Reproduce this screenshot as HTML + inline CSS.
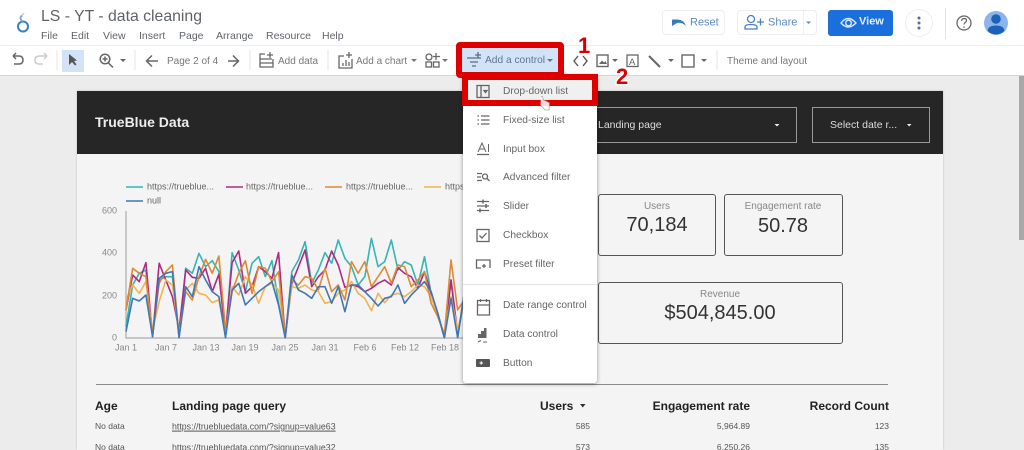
<!DOCTYPE html>
<html><head><meta charset="utf-8"><style>
html,body{margin:0;padding:0;width:1024px;height:450px;overflow:hidden;background:#ececec}
body{font-family:"Liberation Sans",sans-serif;position:relative;filter:blur(.35px)}
.t{position:absolute;white-space:nowrap;line-height:1;transform:translateY(-50%)}
.b{position:absolute;box-sizing:border-box}
.tb{font-size:10px;color:#777;margin-top:2px}
.mn{font-size:10.5px;color:#5f6368}
.mi{font-size:10.2px;color:#666;left:503px;margin-top:1px}
.ax{font-size:9px;color:#888}
.lg{font-size:9px;color:#666}
.r{text-align:right;transform:translate(-100%,-50%)}
.c{text-align:center;transform:translate(-50%,-50%)}
#o{position:absolute;left:0;top:0;pointer-events:none}
</style></head><body>
<div class="b" style="left:0;top:0;width:1024px;height:76px;background:#fff;border-bottom:1px solid #d5d5d5"></div>
<div class="b" style="left:0;top:45px;width:1024px;height:1px;background:#eee"></div>
<div class="b" style="left:1019px;top:76px;width:5px;height:164px;background:#a8a8a8"></div>

<div class="t" style="left:41px;top:17px;font-size:15.800px;color:#5f6368">LS - YT - data cleaning</div>
<div class="t mn" style="left:41px;top:36px">File</div>
<div class="t mn" style="left:71px;top:36px">Edit</div>
<div class="t mn" style="left:103px;top:36px">View</div>
<div class="t mn" style="left:139px;top:36px">Insert</div>
<div class="t mn" style="left:179px;top:36px">Page</div>
<div class="t mn" style="left:216px;top:36px">Arrange</div>
<div class="t mn" style="left:266px;top:36px">Resource</div>
<div class="t mn" style="left:322px;top:36px">Help</div>

<div class="b" style="left:662px;top:10px;width:63px;height:25px;border:1px solid #eee;border-radius:4px"></div>
<div class="t" style="left:690px;top:23px;font-size:11px;color:#5b8ac4">Reset</div>
<div class="b" style="left:737px;top:10px;width:80px;height:25px;border:1px solid #eee;border-radius:4px"></div>
<div class="b" style="left:803px;top:10px;width:1px;height:25px;background:#eee"></div>
<div class="t" style="left:768px;top:23px;font-size:11px;color:#5b8ac4">Share</div>
<div class="b" style="left:828px;top:10px;width:65px;height:26px;background:#1a6fdc;border-radius:3px"></div>
<div class="t" style="left:859px;top:22px;font-size:11px;font-weight:bold;color:#e8f0fe">View</div>
<div class="b" style="left:905px;top:9px;width:28px;height:28px;border:1px solid #eee;border-radius:50%"></div>
<div class="b" style="left:945px;top:8px;width:1px;height:31px;background:#e4e4e4"></div>

<div class="t tb" style="left:167px;top:60px">Page 2 of 4</div>
<div class="t tb" style="left:278px;top:60px">Add data</div>
<div class="t tb" style="left:356px;top:60px">Add a chart</div>
<div class="t tb" style="left:727px;top:60px">Theme and layout</div>
<div class="b" style="left:62px;top:50px;width:22px;height:22px;background:#d2e3f8"></div>

<div class="b" style="left:77px;top:91px;width:866px;height:359px;background:#f4f4f4;box-shadow:0 0 2px #bbb"></div>
<div class="b" style="left:77px;top:91px;width:866px;height:63px;background:#262626"></div>
<div class="t" style="left:95px;top:122px;font-size:14px;font-weight:bold;color:#eee">TrueBlue Data</div>
<div class="b" style="left:520px;top:107px;width:277px;height:36px;border:1px solid #999"></div>
<div class="t" style="left:598px;top:125px;font-size:10.5px;color:#ddd">Landing page</div>
<div class="b" style="left:812px;top:107px;width:118px;height:36px;border:1px solid #999"></div>
<div class="t" style="left:830px;top:125px;font-size:10.5px;color:#ddd">Select date r...</div>

<div class="b" style="left:598px;top:194px;width:118px;height:62px;border:1.3px solid #555;border-radius:3px"></div>
<div class="b" style="left:724px;top:194px;width:119px;height:62px;border:1.3px solid #555;border-radius:3px"></div>
<div class="b" style="left:598px;top:282px;width:245px;height:62px;border:1.3px solid #555;border-radius:3px"></div>
<div class="t c" style="left:657px;top:207px;font-size:10px;color:#888">Users</div>
<div class="t c" style="left:657px;top:225px;font-size:20px;color:#333">70,184</div>
<div class="t c" style="left:783px;top:207px;font-size:10px;color:#888">Engagement rate</div>
<div class="t c" style="left:783px;top:226px;font-size:20px;color:#333">50.78</div>
<div class="t c" style="left:720px;top:295px;font-size:10px;color:#888">Revenue</div>
<div class="t c" style="left:720px;top:313px;font-size:20px;color:#333">$504,845.00</div>

<div class="t lg" style="left:147px;top:187px">https://trueblue...</div>
<div class="t lg" style="left:246px;top:187px">https://trueblue...</div>
<div class="t lg" style="left:346px;top:187px">https://trueblue...</div>
<div class="t lg" style="left:445px;top:187px">https://trueblue...</div>
<div class="t lg" style="left:147px;top:201px">null</div>
<div class="t ax r" style="left:117px;top:211px">600</div>
<div class="t ax r" style="left:117px;top:253px">400</div>
<div class="t ax r" style="left:117px;top:296px">200</div>
<div class="t ax r" style="left:117px;top:338px">0</div>
<div class="t ax c" style="left:126px;top:348px">Jan 1</div>
<div class="t ax c" style="left:166px;top:348px">Jan 7</div>
<div class="t ax c" style="left:206px;top:348px">Jan 13</div>
<div class="t ax c" style="left:245px;top:348px">Jan 19</div>
<div class="t ax c" style="left:285px;top:348px">Jan 25</div>
<div class="t ax c" style="left:325px;top:348px">Jan 31</div>
<div class="t ax c" style="left:365px;top:348px">Feb 6</div>
<div class="t ax c" style="left:405px;top:348px">Feb 12</div>
<div class="t ax c" style="left:445px;top:348px">Feb 18</div>

<svg width="1024" height="450" style="position:absolute;left:0;top:0">
<path d="M126 211V338H470" fill="none" stroke="#aaa" stroke-width="1.2"/>
<g stroke-width="1.4" fill="none">
<path d="M126 187H143" stroke="#35b5b5"/><path d="M226 187H243" stroke="#b02a82"/><path d="M325 187H342" stroke="#dd8a35"/><path d="M424 187H441" stroke="#f2b350"/><path d="M126 201H143" stroke="#3f78b5"/>
</g>
<g transform="translate(126,170) scale(6.633,0.3333)" fill="none" stroke-width="1.6" stroke-linejoin="round">
<polyline vector-effect="non-scaling-stroke" stroke="#35b5b5" points="0,470 1,345 2,310 3,300 4,500 5,330 6,320 7,320 8,503 9,295 10,310 11,250 12,290 13,272 14,305 15,503 16,248 17,300 18,365 19,280 20,260 21,320 22,272 23,400 24,503 25,305 26,270 27,215 28,340 29,300 30,248 31,280 32,210 33,265 34,290 35,345 36,320 37,205 38,290 39,275 40,210 41,300 42,275 43,285 44,345 45,260 46,370 47,430 48,503 49,330 50,503 51,370"/>
<polyline vector-effect="non-scaling-stroke" stroke="#b02a82" points="0,420 1,315 2,335 3,278 4,500 5,280 6,330 7,380 8,480 9,300 10,322 11,325 12,295 13,365 14,313 15,490 16,278 17,243 18,370 19,350 20,290 21,305 22,325 23,248 24,503 25,340 26,290 27,240 28,350 29,320 30,300 31,243 32,285 33,352 34,345 35,350 36,365 37,355 38,340 39,330 40,345 41,293 42,310 43,320 44,355 45,305 46,370 47,430 48,503 49,330 50,490 51,390"/>
<polyline vector-effect="non-scaling-stroke" stroke="#f2b350" points="0,390 1,345 2,370 3,335 4,480 5,395 6,330 7,345 8,490 9,360 10,340 11,370 12,375 13,398 14,390 15,495 16,350 17,375 18,320 19,345 20,400 21,350 22,340 23,360 24,490 25,350 26,355 27,345 28,360 29,365 30,400 31,395 32,370 33,360 34,335 35,370 36,385 37,422 38,370 39,398 40,375 41,370 42,380 43,365 44,345 45,350 46,380 47,440 48,490 49,380 50,480 51,400"/>
<polyline vector-effect="non-scaling-stroke" stroke="#dd8a35" points="0,420 1,295 2,310 3,320 4,495 5,340 6,305 7,285 8,500 9,365 10,390 11,320 12,268 13,310 14,258 15,480 16,365 17,310 18,272 19,370 20,290 21,295 22,335 23,305 24,500 25,330 26,345 27,320 28,325 29,360 30,295 31,365 32,345 33,390 34,275 35,310 36,275 37,350 38,320 39,290 40,340 41,285 42,290 43,350 44,330 45,305 46,400 47,440 48,495 49,270 50,420 51,390"/>
<polyline vector-effect="non-scaling-stroke" stroke="#3f78b5" points="0,485 1,385 2,393 3,375 4,500 5,325 6,310 7,305 8,503 9,350 10,380 11,290 12,330 13,365 14,380 15,503 16,360 17,340 18,405 19,385 20,365 21,350 22,335 23,405 24,503 25,315 26,360 27,370 28,385 29,350 30,350 31,400 32,350 33,425 34,345 35,345 36,365 37,385 38,408 39,385 40,380 41,345 42,400 43,375 44,355 45,335 46,365 47,430 48,503 49,385 50,503 51,370"/>
</g>
</svg>

<div class="b" style="left:96px;top:384px;width:792px;height:1px;background:#8a8a8a"></div>
<div class="t" style="left:95px;top:406px;font-size:12px;font-weight:bold;color:#222">Age</div>
<div class="t" style="left:172px;top:406px;font-size:12px;font-weight:bold;color:#222">Landing page query</div>
<div class="t" style="left:540px;top:406px;font-size:12px;font-weight:bold;color:#222">Users</div>
<div class="t r" style="left:750px;top:406px;font-size:12px;font-weight:bold;color:#222">Engagement rate</div>
<div class="t r" style="left:889px;top:406px;font-size:12px;font-weight:bold;color:#222">Record Count</div>
<div class="t" style="left:95px;top:426px;font-size:8.500px;color:#555">No data</div>
<div class="t" style="left:172px;top:427px;font-size:8.800px;color:#555;text-decoration:underline">https://truebluedata.com/?signup=value63</div>
<div class="t r" style="left:590px;top:426px;font-size:8.500px;color:#555">585</div>
<div class="t r" style="left:750px;top:426px;font-size:8.500px;color:#555">5,964.89</div>
<div class="t r" style="left:889px;top:426px;font-size:8.500px;color:#555">123</div>
<div class="t" style="left:95px;top:447px;font-size:8.500px;color:#555">No data</div>
<div class="t" style="left:172px;top:448px;font-size:8.800px;color:#555">https://truebluedata.com/?signup=value32</div>
<div class="t r" style="left:590px;top:447px;font-size:8.500px;color:#555">573</div>
<div class="t r" style="left:750px;top:447px;font-size:8.500px;color:#555">6,250.26</div>
<div class="t r" style="left:889px;top:447px;font-size:8.500px;color:#555">135</div>

<!-- menu -->
<div class="b" style="left:463px;top:75px;width:134px;height:308px;background:#fff;border-radius:0 0 3px 3px;box-shadow:0 1px 4px rgba(0,0,0,.4)"></div>
<div class="b" style="left:463px;top:284px;width:134px;height:1px;background:#e2e2e2"></div>
<div class="b" style="left:468px;top:80px;width:124px;height:21px;background:#f0f0f0"></div>
<div class="t mi" style="top:91px">Drop-down list</div>
<div class="t mi" style="top:120px">Fixed-size list</div>
<div class="t mi" style="top:149px">Input box</div>
<div class="t mi" style="top:177px">Advanced filter</div>
<div class="t mi" style="top:206px">Slider</div>
<div class="t mi" style="top:235px">Checkbox</div>
<div class="t mi" style="top:264px">Preset filter</div>
<div class="t mi" style="top:305px">Date range control</div>
<div class="t mi" style="top:334px">Data control</div>
<div class="t mi" style="top:363px">Button</div>

<div class="b" style="left:459px;top:45px;width:102px;height:30px;background:#d2e3f8"></div>
<div class="t" style="left:485px;top:61px;font-size:10.200px;color:#5f7590">Add a control</div>

<!-- icons + overlays -->
<svg id="o" width="1024" height="450" fill="none">
<!-- logo -->
<circle cx="23" cy="26.500" r="5" stroke="#3a7fc1" stroke-width="2"/><path d="M23 21.500C19.500 19 20 17 22 15.500" stroke="#7aa6cf" stroke-width="1.800"/><path d="M22 15.500L24 13" stroke="#ccc" stroke-width="1.500"/>
<!-- header buttons -->
<path d="M672 26L672 19.500L678 19.500Q684 20 686 26Q682 22 677 23L672 26Z" fill="#3a78c4"/>
<circle cx="751" cy="19" r="3.500" stroke="#4a80c0" stroke-width="1.300"/><path d="M745 29V27Q745 24.500 751 24.500Q757 24.500 757 27V29Z" stroke="#4a80c0" stroke-width="1.300"/><path d="M757 22H764M760.500 18.500V25.500" stroke="#4a80c0" stroke-width="1.300"/>
<path d="M806 21.500H811L808.500 24Z" fill="#5b8ac4"/>
<path d="M841 23Q848 14 856 23Q848 31 841 23Z" stroke="#dbe8fb" stroke-width="1.400"/><circle cx="848.500" cy="23" r="2.800" stroke="#dbe8fb" stroke-width="1.400"/>
<g fill="#4a6f9f"><circle cx="919" cy="18" r="1.500"/><circle cx="919" cy="23" r="1.500"/><circle cx="919" cy="28" r="1.500"/></g>
<circle cx="964" cy="23" r="7" stroke="#666" stroke-width="1.300"/><path d="M961.500 21Q962 18.500 964 18.500Q966.500 18.500 966.500 20.500C966.500 22.500 964 22.500 964 24.500" stroke="#666" stroke-width="1.200"/><circle cx="964" cy="27" r=".8" fill="#666"/>
<circle cx="996" cy="23" r="12" fill="#8db4ea"/><circle cx="996" cy="19" r="4.800" fill="#1c62b9"/><path d="M987.500 31Q988 25.500 996 25.500Q1004 25.500 1004.500 31Q996 38 987.500 31Z" fill="#1c62b9"/>
<!-- toolbar left -->
<path d="M13 56L16 53M13 56L16 59M13 56H19Q23 56 23 60Q23 64 19 64H14" stroke="#666" stroke-width="1.500"/>
<path d="M47 56L44 53M47 56L44 59M47 56H40Q35 56 35 60Q35 64 39 64H43" stroke="#ccc" stroke-width="1.500"/>
<path d="M69 54L69 65L72 62L75 65.500L76.500 64.500L74 61L77 60.500Z" fill="#555"/>
<circle cx="105" cy="59" r="4.800" stroke="#666" stroke-width="1.500"/><path d="M108.500 63L113 67.500M102.500 59H107.500M105 56.500V61.500" stroke="#666" stroke-width="1.500"/>
<path d="M120 59H126L123 62Z" fill="#666"/>
<path d="M158 61H147M152 55.500L146.500 61L152 66.500" stroke="#666" stroke-width="1.500"/>
<path d="M228 61H238M233 55.500L238.500 61L233 66.500" stroke="#666" stroke-width="1.500"/>
<g stroke="#e6e6e6"><path d="M57 50V70M135 50V70M250 50V70M328 50V70M717 50V70"/></g>
<path d="M265 54H260V67H273V59M260 59H272M260 63H273M270 52V58M267 55H273" stroke="#666" stroke-width="1.300"/>
<path d="M344 56H339V68H352V59M343 66V63M346 66V60M349 66V62M349 52V58M346 55H352" stroke="#666" stroke-width="1.300"/>
<path d="M411 59H417L414 62Z" fill="#777"/>
<g stroke="#666" stroke-width="1.300"><circle cx="429" cy="57" r="3"/><rect x="426" y="62" width="5.500" height="5"/><rect x="433.500" y="62" width="5.500" height="5"/><path d="M436 53V60M433 56.500H440"/></g>
<path d="M442 59H448L445 62Z" fill="#777"/>
<!-- add a control icon -->
<path d="M467 58H481M470 62H478M472 66H476M478 52V58M475 55H481" stroke="#5f6a80" stroke-width="1.300"/>
<path d="M547 59H553L550 62Z" fill="#5f7590"/>
<path d="M578 56L574 61L578 66M583 56L587 61L583 66" stroke="#555" stroke-width="1.400"/>
<rect x="597" y="55" width="11" height="11.500" stroke="#666" stroke-width="1.400"/><path d="M599 64L602 60.500L604 62.500L605.500 61L607 64Z" fill="#666"/>
<path d="M612 59H618L615 62Z" fill="#666"/>
<rect x="627" y="55" width="11" height="11.500" stroke="#666" stroke-width="1.300"/><text x="629" y="65" font-family="Liberation Sans" font-size="9.500" fill="#666">A</text>
<path d="M649 56L660 67" stroke="#666" stroke-width="2"/>
<path d="M668 59H674L671 62Z" fill="#666"/>
<rect x="682" y="55" width="12" height="12" stroke="#666" stroke-width="1.400"/>
<path d="M701 59H707L704 62Z" fill="#666"/>
<!-- menu icons -->
<g stroke="#666" stroke-width="1.300">
<rect x="477" y="85.500" width="12" height="12"/><path d="M481 85.500V97.500"/><path d="M484 90.500H487L485.500 92.500Z" fill="#666"/>
<path d="M481 116H489.500M481 120H489.500M481 124H489.500M477.500 116H479M477.500 120H479M477.500 124H479"/>
<path d="M477 154.500H489"/><path d="M478 152L482 143L486 152M479.500 149H484.500M488.500 144V152" stroke-width="1"/>
<path d="M477 173.500H482M477 177H481M477 180.500H482"/><circle cx="485" cy="176.500" r="2.500"/><path d="M487 178.500L489.500 181"/>
<path d="M477 201.500H489M477 206H489M477 210.500H489"/><path d="M483 199.500V203.500M486 204V208M480 208.500V212.500" stroke-width="1.500"/>
<rect x="477" y="229.500" width="12" height="12"/><path d="M479.500 235.500L482 238L486.500 233"/>
<path d="M476.500 263V268H481M490 268V260H476.500V263M484 268V264M482 266H486"/>
<path d="M477.500 305H489.500V315H477.500ZM477.500 305V300.500H489.500V305M480.500 299V302M486.500 299V302"/>
</g>
<path d="M478 334H481V338H478ZM481 331H484V338H481ZM484 328H486.500V338H484Z" fill="#666"/><path d="M478 342L481 340.500M483 342H487" stroke="#666" stroke-width="1.100"/>
<rect x="476" y="359" width="14" height="8" rx="1" fill="#555"/><path d="M479.500 363H483M481.200 361.300V364.700" stroke="#fff" stroke-width="1"/>
<!-- carets -->
<path d="M774.500 124H779.500L777 126.500Z" fill="#eee"/><path d="M907 124H911.500L909.200 126.500Z" fill="#eee"/><path d="M580 404H585.500L582.800 407.500Z" fill="#333"/>
<!-- red highlight -->
<rect x="459" y="45" width="102" height="30" rx="1" stroke="#de0000" stroke-width="6"/>
<rect x="465" y="77" width="130" height="26" stroke="#de0000" stroke-width="6"/>
<!-- cursor -->
<path d="M541 96.500L542.500 96.500L543.500 100L547 101.500L549.500 103L549 110H545L540.500 105" stroke="#999" fill="#fff" stroke-width=".8" opacity=".85"/>
<g font-family="Liberation Sans" font-weight="bold" font-size="22" fill="#d80000" stroke="#fff" stroke-width="2.500" paint-order="stroke">
<text x="578" y="53">1</text>
<text x="616" y="84">2</text>
</g>
</svg>
</body></html>
